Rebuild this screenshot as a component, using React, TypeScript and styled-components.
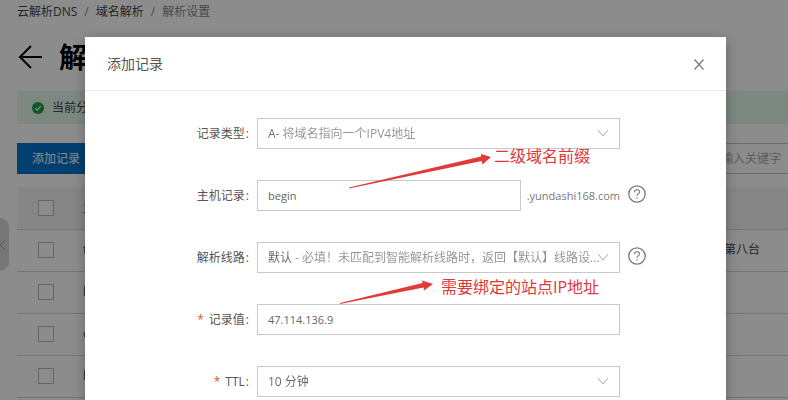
import React from "react";
import styled, { createGlobalStyle } from "styled-components";

const GlobalStyle = createGlobalStyle`
  * { box-sizing: border-box; }
  body {
    margin: 0;
    background: #fff;
    color: #444;
    font: 12px/18px "Open Sans", "Noto Sans CJK SC", sans-serif;
  }
  button, input, select { font: inherit; color: inherit; margin: 0; }
`;

const Screen = styled.div`
  position: relative;
  height: 100vh;
  overflow: hidden;
`;

const Page = styled.main`
  padding: 3px 0 0 17px;
`;

const Breadcrumb = styled.nav`
  display: flex;
  gap: 7px;
  color: #444;

  a { color: inherit; text-decoration: none; }
  span { color: #888; }
`;

const TitleRow = styled.div`
  display: flex;
  align-items: center;
  gap: 16px;
  height: 40px;
  margin: 16px 0 14px;

  h1 {
    margin: 0;
    font-size: 28px;
    line-height: 40px;
    color: #000;
    white-space: nowrap;
  }
`;

const IconButton = styled.button`
  display: inline-flex;
  align-items: center;
  justify-content: center;
  padding: 0;
  border: 0;
  background: none;
  cursor: pointer;
`;

const Alert = styled.div`
  display: flex;
  align-items: center;
  gap: 8px;
  height: 33px;
  padding-left: 15px;
  background: #e4f7e9;
`;

const Toolbar = styled.div`
  display: flex;
  justify-content: space-between;
  height: 31px;
  margin: 19px 0 13px;
`;

const PrimaryButton = styled.button`
  padding: 0 15px;
  border: 0;
  background: #0074cc;
  color: #fff;
`;

const SearchInput = styled.input`
  width: 80px;
  padding: 0 0 0 12px;
  border: 1px solid #c4c4c4;
  border-right: 0;
  background: #fff;
  &::placeholder { color: #aaa; opacity: 1; }
`;

const Table = styled.table`
  width: 100%;
  border-collapse: collapse;
  table-layout: fixed;
  text-align: left;
`;

const HeadRow = styled.tr`
  background: #f5f5f5;
  height: 42px;
`;

const BodyRow = styled.tr`
  height: 42px;
`;

const Cell = styled.td<{ $width?: number }>`
  width: ${(p) => (p.$width ? `${p.$width}px` : "auto")};
  padding: 0;
  border-bottom: 1px solid #d4d4d4;
  font-weight: 400;
  white-space: nowrap;
`;

const Checkbox = styled.input`
  appearance: none;
  display: block;
  width: 16px;
  height: 16px;
  margin: 0 0 0 21px;
  border: 1px solid #b8b8b8;
  background: #fff;
`;

const CollapseTab = styled.button`
  position: absolute;
  left: 0;
  top: 218px;
  display: flex;
  align-items: center;
  width: 9px;
  height: 53px;
  padding: 0;
  border: 0;
  border-radius: 0 9px 9px 0;
  background: #d8d8d8;
`;

const Overlay = styled.div`
  position: absolute;
  inset: 0;
  display: flex;
  padding: 37px 62px 0 85px;
  background: rgba(0, 0, 0, 0.45);
`;

const Dialog = styled.section`
  flex: 1;
  min-width: 0;
  height: max-content;
  background: #fff;
  box-shadow: 0 3px 12px rgba(0, 0, 0, 0.28);
`;

const DialogHeader = styled.header`
  display: flex;
  align-items: center;
  justify-content: space-between;
  height: 54px;
  padding: 0 22px;
  border-bottom: 1px solid #e8e8e8;

  h2 {
    margin: 0;
    font-size: 14px;
    line-height: 20px;
    font-weight: 400;
    color: #555;
  }
`;

const Form = styled.form`
  position: relative;
  display: flex;
  flex-direction: column;
  gap: 31px;
  padding: 27px 0 40px;
`;

const FormRow = styled.div`
  display: grid;
  grid-template-columns: 164px minmax(0, 1fr) 98px;
  column-gap: 8px;
  align-items: center;
  height: 31px;
`;

const Label = styled.label`
  text-align: right;
  color: #555;

  &::after {
    content: ":";
    margin-left: 1px;
  }
`;

const Required = styled.span`
  margin-right: 5px;
  color: #e0523c;
`;

const SelectBox = styled.div`
  position: relative;
  height: 31px;

  svg {
    position: absolute;
    right: 11px;
    top: 11px;
    pointer-events: none;
  }
`;

const Select = styled.select<{ $lead: number }>`
  appearance: none;
  display: block;
  width: 100%;
  height: 31px;
  padding: 0 0 0 10px;
  border: 1px solid #c8c8c8;
  border-radius: 0;
  color: transparent;
  background: linear-gradient(to right, #666 ${(p) => p.$lead}px, #929292 ${(p) => p.$lead}px);
  background-clip: text;
  -webkit-background-clip: text;
`;

const InputGroup = styled.div`
  display: flex;
  align-items: center;
  gap: 6px;
  color: #777;
  font-size: 11px;
`;

const TextInput = styled.input`
  flex: 1;
  min-width: 0;
  height: 31px;
  padding: 0 10px;
  border: 1px solid #c8c8c8;
  background: #fff;
  color: #666;
  font-size: 11px;
`;

const HelpButton = styled(IconButton)`
  justify-self: start;
  width: 20px;
  height: 20px;
  margin-bottom: 4px;
`;

const Note = styled.p<{ $left: number; $top: number }>`
  position: absolute;
  left: ${(p) => p.$left}px;
  top: ${(p) => p.$top}px;
  margin: 0;
  font-size: 16px;
  line-height: 20px;
  color: #e0373b;
  white-space: nowrap;
`;

const Arrows = styled.svg`
  position: absolute;
  left: 0;
  top: 0;
  pointer-events: none;
`;

const Chevron = () => (
  <svg width="12" height="9" viewBox="0 0 12 9" fill="none" stroke="#aaa" aria-hidden="true">
    <path d="M1 1l5 6 5-6" />
  </svg>
);

const Help = () => (
  <HelpButton type="button" aria-label="帮助">
    <svg width="20" height="20" viewBox="0 0 20 20" fill="none" stroke="#777" strokeWidth="1.3">
      <circle cx="9" cy="10" r="8.2" />
      <path d="M6.5 8.300c0-3.500 5-3.300 5-.3 0 2-2.500 1.800-2.500 3.700" strokeWidth="1.1" />
      <path d="M9 13.200v1.300" />
    </svg>
  </HelpButton>
);

type DropDownProps = { id: string; text: string; lead: number };
const DropDown = ({ id, text, lead }: DropDownProps) => (
  <SelectBox>
    <Select id={id} $lead={lead}>
      <option>{text}</option>
    </Select>
    <Chevron />
  </SelectBox>
);

const rows = [
  { host: "t", note: "第八台" },
  { host: "b", note: "" },
  { host: "c", note: "" },
  { host: "b", note: "" },
];

export default function App() {
  return (
    <Screen>
      <GlobalStyle />
      <Page>
        <Breadcrumb>
          <a href="#dns">云解析DNS</a>
          <span>/</span>
          <a href="#domains">域名解析</a>
          <span>/</span>
          <span>解析设置</span>
        </Breadcrumb>
        <TitleRow>
          <IconButton aria-label="返回">
            <svg width="26" height="26" viewBox="0 0 26 26" fill="none" stroke="#000" strokeWidth="2">
              <path d="M25 13H3M14 2L3 13l11 11" />
            </svg>
          </IconButton>
          <h1>解</h1>
        </TitleRow>
        <Alert>
          <svg width="12" height="12" viewBox="0 0 12 12" aria-hidden="true">
            <circle cx="6" cy="6" r="6" fill="#1e9e46" />
            <path d="M3.2 6.2l2 2 3.6-4" fill="none" stroke="#fff" strokeWidth="1.2" />
          </svg>
          当前分
        </Alert>
        <Toolbar>
          <PrimaryButton>添加记录</PrimaryButton>
          <SearchInput aria-label="搜索" placeholder="输入关键字" />
        </Toolbar>
        <Table>
          <thead>
            <HeadRow>
              <Cell as="th" $width={66}><Checkbox type="checkbox" aria-label="全选" /></Cell>
              <Cell as="th">主</Cell>
              <Cell as="th" $width={64} />
            </HeadRow>
          </thead>
          <tbody>
            {rows.map((r, i) => (
              <BodyRow key={i}>
                <Cell><Checkbox type="checkbox" aria-label={r.host} /></Cell>
                <Cell>{r.host}</Cell>
                <Cell>{r.note}</Cell>
              </BodyRow>
            ))}
          </tbody>
        </Table>
      </Page>
      <CollapseTab aria-label="收起">
        <svg width="6" height="12" viewBox="0 0 6 12" fill="none" stroke="#999">
          <path d="M5 1L0 6l5 5" />
        </svg>
      </CollapseTab>

      <Overlay>
        <Dialog role="dialog" aria-labelledby="dialog-title">
          <DialogHeader>
            <h2 id="dialog-title">添加记录</h2>
            <IconButton aria-label="关闭">
              <svg width="10" height="12" viewBox="0 0 10 12" fill="none" stroke="#777" strokeWidth="1.2">
                <path d="M.5 1.5l9 10M9.5 1.5l-9 10" />
              </svg>
            </IconButton>
          </DialogHeader>
          <Form>
            <FormRow>
              <Label htmlFor="type">记录类型</Label>
              <DropDown id="type" lead={24} text="A- 将域名指向一个IPV4地址" />
            </FormRow>
            <FormRow>
              <Label htmlFor="host">主机记录</Label>
              <InputGroup>
                <TextInput id="host" defaultValue="begin" />
                <span>.yundashi168.com</span>
              </InputGroup>
              <Help />
            </FormRow>
            <FormRow>
              <Label htmlFor="line">解析线路</Label>
              <DropDown
                id="line"
                lead={35}
                text="默认 - 必填！未匹配到智能解析线路时，返回【默认】线路设..."
              />
              <Help />
            </FormRow>
            <FormRow>
              <Label htmlFor="value"><Required>*</Required>记录值</Label>
              <TextInput id="value" defaultValue="47.114.136.9" />
            </FormRow>
            <FormRow>
              <Label htmlFor="ttl"><Required>*</Required>TTL</Label>
              <DropDown id="ttl" lead={200} text="10 分钟" />
            </FormRow>
            <Arrows width="420" height="230" viewBox="0 0 420 230" fill="#e03a3a" aria-hidden="true">
              <path d="M264 96.500L396 65.500V63L406 66l-8.500 7.500-.8-3.500L264 97.500z" />
              <path d="M255 212L337.500 192l-.5-2.500L348 193l-9 6.500-.5-3L255 213z" />
            </Arrows>
            <Note $left={409} $top={55}>二级域名前缀</Note>
            <Note $left={356} $top={186}>需要绑定的站点IP地址</Note>
          </Form>
        </Dialog>
      </Overlay>
    </Screen>
  );
}
